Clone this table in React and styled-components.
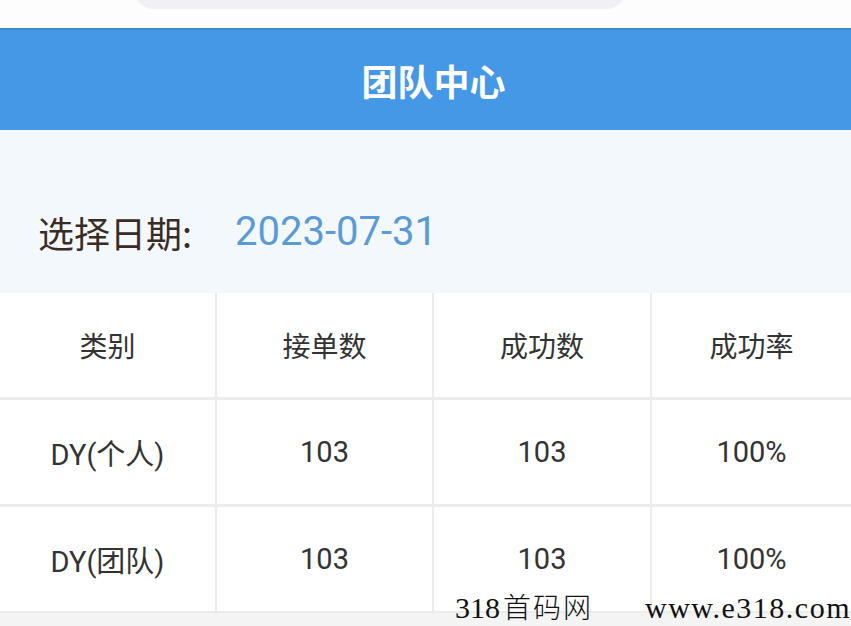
import React from "react";
import styled, { createGlobalStyle } from "styled-components";

const rows = [
  { type: "DY(个人)", orders: 103, success: 103, rate: "100%" },
  { type: "DY(团队)", orders: 103, success: 103, rate: "100%" },
];

const GlobalStyle = createGlobalStyle`
  * { box-sizing: border-box; }
  body {
    margin: 0;
    font-family: Roboto, "Noto Sans CJK SC", sans-serif;
    background: #f4f4f4;
  }
`;

const Page = styled.div`
  position: relative;
  width: 851px;
  height: 626px;
  overflow: hidden;
  background: #f4f4f4;
`;

const TopStrip = styled.div`
  height: 28px;
  background: #fdfdfd;
  overflow: hidden;
`;

const SearchPill = styled.div`
  margin-left: 134px;
  margin-top: -31px;
  width: 492px;
  height: 40px;
  border-radius: 20px;
  background: #f1f1f3;
`;

const Header = styled.header`
  height: 102px;
  background: #4598e6;
  border-top: 2px solid #3f86cc;
  display: flex;
  align-items: center;
  justify-content: center;
  padding-left: 16px;
  color: #fff;
  font-size: 36px;
  font-weight: bold;
  font-family: "Noto Sans CJK SC", sans-serif;
`;

const DateBar = styled.div`
  height: 163px;
  background: #f3f8fc;
  display: flex;
  align-items: center;
  padding: 40px 0 0 38px;
`;

const DateLabel = styled.span`
  font-family: "Noto Sans CJK SC", sans-serif;
  font-size: 36px;
  color: #3b2b25;
  margin-right: 43px;
`;

const DateValue = styled.span`
  font-family: Roboto, sans-serif;
  font-size: 40px;
  color: #5b9bd5;
`;

const Table = styled.div`
  display: grid;
  grid-template-columns: 215px 215px 216px 1fr;
  grid-auto-rows: 104px;
  column-gap: 2px;
  row-gap: 3px;
  background: #ececec;
  padding-bottom: 2px;
`;

const Cell = styled.div`
  background: #fff;
  display: flex;
  align-items: center;
  justify-content: center;
  color: #333;
  font-size: ${(p) => (p.head ? "28px" : "29px")};
  font-family: ${(p) =>
    p.head ? '"Noto Sans CJK SC", sans-serif' : 'Roboto, "Noto Sans CJK SC", sans-serif'};
`;

const Watermark = styled.div`
  position: absolute;
  right: 0;
  bottom: 0;
  display: flex;
  align-items: baseline;
  gap: 52px;
  font-family: "Liberation Serif", serif;
  font-size: 30px;
  color: #111;
  white-space: pre;
`;

const MarkPart = styled.span`
  letter-spacing: ${(p) => p.spacing || 0}px;
`;

const MarkHan = styled.span`
  font-family: "Noto Sans CJK SC", sans-serif;
  font-weight: 300;
  font-size: 28px;
  letter-spacing: 2px;
  margin-left: 3px;
`;

export default function App() {
  return (
    <Page>
      <GlobalStyle />
      <TopStrip>
        <SearchPill />
      </TopStrip>
      <Header>团队中心</Header>
      <DateBar>
        <DateLabel>选择日期:</DateLabel>
        <DateValue>2023-07-31</DateValue>
      </DateBar>
      <Table>
        {["类别", "接单数", "成功数", "成功率"].map((h) => (
          <Cell head key={h}>{h}</Cell>
        ))}
        {rows.map((r) => (
          <React.Fragment key={r.type}>
            <Cell>{r.type}</Cell>
            <Cell>{r.orders}</Cell>
            <Cell>{r.success}</Cell>
            <Cell>{r.rate}</Cell>
          </React.Fragment>
        ))}
      </Table>
      <Watermark>
        <MarkPart>
          318<MarkHan>首码网</MarkHan>
        </MarkPart>
        <MarkPart spacing={1.5}>www.e318.com</MarkPart>
      </Watermark>
    </Page>
  );
}
